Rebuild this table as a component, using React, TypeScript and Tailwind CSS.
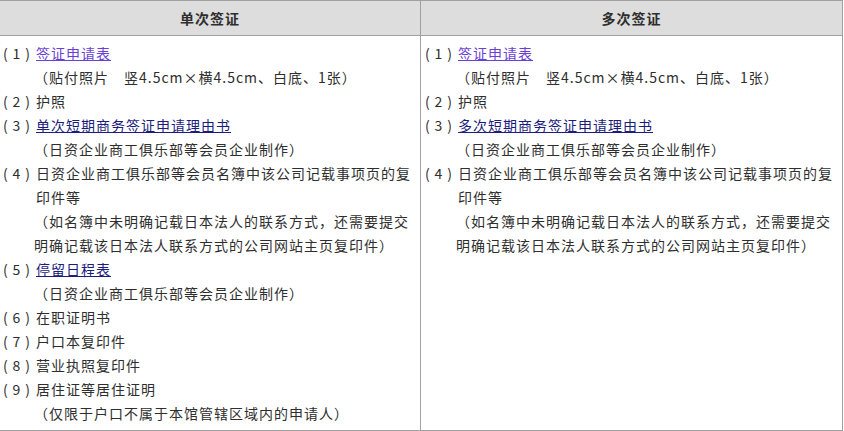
const single = [
  { no: "1", text: "签证申请表", link: "visited", notes: ["（贴付照片　竖4.5cm×横4.5cm、白底、1张）"] },
  { no: "2", text: "护照" },
  { no: "3", text: "单次短期商务签证申请理由书", link: "link", notes: ["（日资企业商工俱乐部等会员企业制作）"] },
  {
    no: "4",
    text: "日资企业商工俱乐部等会员名簿中该公司记载事项页的复印件等",
    notes: ["（如名簿中未明确记载日本法人的联系方式，还需要提交明确记载该日本法人联系方式的公司网站主页复印件）"],
  },
  { no: "5", text: "停留日程表", link: "link", notes: ["（日资企业商工俱乐部等会员企业制作）"] },
  { no: "6", text: "在职证明书" },
  { no: "7", text: "户口本复印件" },
  { no: "8", text: "营业执照复印件" },
  { no: "9", text: "居住证等居住证明", notes: ["（仅限于户口不属于本馆管辖区域内的申请人）"] },
];

const multiple = [
  single[0],
  single[1],
  { no: "3", text: "多次短期商务签证申请理由书", link: "link", notes: ["（日资企业商工俱乐部等会员企业制作）"] },
  single[3],
];

type Item = { no: string; text: string; link?: string; notes?: string[] };

function Row({ item }: { item: Item }) {
  return (
    <div className="flex">
      <span className="w-[36px] shrink-0 flex justify-between pl-[3px] pr-[6px] tracking-normal">
        <span>(</span>
        <span>{item.no}</span>
        <span>)</span>
      </span>
      <div className="flex-1">
        {item.link ? (
          <a
            href="#"
            className={
              item.link === "visited" ? "underline text-[#6a3fd6]" : "underline text-[#1c1c7e]"
            }
          >
            {item.text}
          </a>
        ) : (
          <span>{item.text}</span>
        )}
        {item.notes?.map((n) => (
          <div key={n} className="-ml-[2px]">
            {n}
          </div>
        ))}
      </div>
    </div>
  );
}

function Cell({ items }: { items: Item[] }) {
  return (
    <div className="pt-[5px] pr-2">
      {items.map((it) => (
        <Row key={it.no + it.text} item={it} />
      ))}
    </div>
  );
}

export default function App() {
  return (
    <div className="w-[844px] h-[431px] bg-white text-[#2e2e2e] text-[14px] leading-[24px] tracking-[1px] font-['Noto_Sans_CJK_SC','Noto_Sans',sans-serif]">
      <div className="w-[843px] h-[431px] border-t border-r border-b border-[#a0a0a0] grid grid-cols-[421px_1fr] grid-rows-[35px_1fr]">
        <div className="bg-[#dddddd] border-b border-r border-[#a0a0a0] flex items-center justify-center font-bold">
          单次签证
        </div>
        <div className="bg-[#dddddd] border-b border-[#a0a0a0] flex items-center justify-center font-bold">
          多次签证
        </div>
        <div className="border-r border-[#a0a0a0]">
          <Cell items={single} />
        </div>
        <div className="pl-px">
          <Cell items={multiple} />
        </div>
      </div>
    </div>
  );
}
